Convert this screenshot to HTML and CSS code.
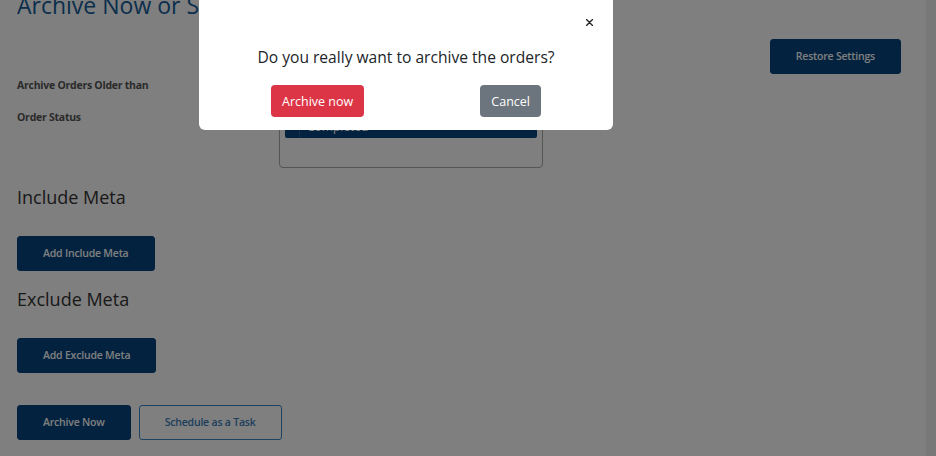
FILE: index.html
```html
<!DOCTYPE html>
<html lang="en">
<head>
<meta charset="utf-8">
<title>Archive Orders</title>
<link rel="stylesheet" href="styles.css">
</head>
<body>
<div class="screen">
  <main class="page">
    <header class="page-head">
      <h1 class="title">Archive Now or Schedule as a Task</h1>
      <button class="btn btn-primary restore" type="button">Restore Settings</button>
    </header>
    <div class="form">
      <div class="row">
        <label class="label">Archive Orders Older than</label>
        <div class="field field-inline">
          <input class="input" type="number" value="30">
          <select class="select"><option>Days</option></select>
        </div>
      </div>
      <div class="row">
        <label class="label">Order Status</label>
        <div class="field">
          <div class="multi">
            <span class="chip"><span class="chip-x">×</span><span class="chip-text">Completed</span></span>
          </div>
        </div>
      </div>
    </div>
    <h2 class="section section-first">Include Meta</h2>
    <button class="btn btn-primary" type="button">Add Include Meta</button>
    <h2 class="section">Exclude Meta</h2>
    <button class="btn btn-primary" type="button">Add Exclude Meta</button>
    <div class="actions">
      <button class="btn btn-primary" type="button">Archive Now</button>
      <button class="btn btn-outline" type="button">Schedule as a Task</button>
    </div>
  </main>
  <aside class="gutter"></aside>
</div>
<div class="backdrop"></div>
<div class="modal" role="dialog">
  <div class="modal-head">
    <button class="close" type="button" aria-label="Close">
      <svg width="7" height="7" viewBox="0 0 7 7"><path d="M0.5 0.5L6.5 6.5M6.5 0.5L0.5 6.5" stroke="#222" stroke-width="1.4" stroke-linecap="round"/></svg>
    </button>
  </div>
  <p class="modal-body">Do you really want to archive the orders?</p>
  <div class="modal-foot">
    <button class="mbtn mbtn-danger" type="button">Archive now</button>
    <button class="mbtn mbtn-secondary" type="button">Cancel</button>
  </div>
</div>
</body>
</html>
```
FILE: styles.css
```css
* { box-sizing: border-box; }
html, body { margin: 0; padding: 0; }
body {
  font-family: "Open Sans", "Noto Sans", sans-serif;
  background: #f0f0f1;
  overflow: hidden;
  height: 456px;
}
.screen { display: flex; height: 456px; }
.page {
  flex: 1;
  background: #fff;
  padding: 0 25px 0 17px;
  overflow: hidden;
}
.gutter { width: 10px; flex: none; }

.page-head {
  display: flex;
  justify-content: space-between;
  align-items: flex-start;
  margin-top: -9px;
  height: 81px;
}
.title {
  margin: 0;
  font-size: 23px;
  line-height: 28px;
  font-weight: 400;
  color: #155d98;
  white-space: nowrap;
}
.restore { margin-top: 48px; height: 33px; }

.form { margin-top: 4px; }
.row { display: grid; grid-template-columns: 262px auto; }
.row + .row { margin-top: 4px; }
.label {
  font-size: 10.5px;
  font-weight: 700;
  letter-spacing: -0.25px;
  line-height: 18px;
  color: #555;
}
.field-inline { display: flex; gap: 6px; height: 28px; }
.input, .select {
  height: 28px;
  border: 1px solid #8c8f94;
  border-radius: 4px;
  font: 13px "Open Sans", sans-serif;
  padding: 0 8px;
}
.input { width: 70px; }
.select { width: 120px; }
.multi {
  width: 264px;
  height: 60px;
  border: 1px solid #aaa;
  border-radius: 4px;
  padding: 7px 5px;
}
.chip {
  display: flex;
  height: 22px;
  background: #044480;
  border-radius: 2px;
  color: #fff;
  font-size: 12px;
  line-height: 22px;
}
.chip-x { width: 15px; text-align: center; border-right: 1px solid #2d5f90; color: #cfd8e0; }
.chip-text { padding-left: 7px; }

.section {
  font-size: 18px;
  font-weight: 400;
  line-height: 24px;
  color: #333;
  margin: 16px 0 27px;
}
.section-first { margin-top: 17px; }

.btn {
  display: block;
  height: 35px;
  padding: 0 25px;
  border-radius: 3px;
  font: 600 10.5px/1 "Open Sans", sans-serif;
  letter-spacing: -0.2px;
  border: 1px solid #044480;
  background: #044480;
  color: #fff;
  white-space: nowrap;
}
.btn-outline { background: #fff; border-color: #3a86c8; color: #3a7cb8; }
.actions { margin-top: 32px; display: flex; gap: 8px; }

.backdrop { position: fixed; inset: 0; background: rgba(0, 0, 0, 0.5); }
.modal {
  position: absolute;
  top: -10px;
  left: 199px;
  width: 414px;
  background: #fff;
  border-radius: 6px;
  padding-bottom: 13px;
}
.modal-head { display: flex; justify-content: flex-end; padding: 29px 20px 0; }
.close {
  display: block;
  width: 7px;
  height: 7px;
  padding: 0;
  border: 0;
  background: none;
  line-height: 0;
}
.modal-body {
  margin: 20px 0 0;
  text-align: center;
  font-size: 15.6px;
  line-height: 22px;
  color: #212529;
}
.modal-foot {
  display: flex;
  justify-content: space-between;
  padding: 0 72px;
  margin-top: 17px;
}
.mbtn {
  height: 32px;
  padding: 0 11px;
  border: 0;
  border-radius: 4px;
  color: #fff;
  font: 12.5px "Open Sans", sans-serif;
}
.mbtn-danger { background: #dc3545; }
.mbtn-secondary { background: #6c757d; }
```
